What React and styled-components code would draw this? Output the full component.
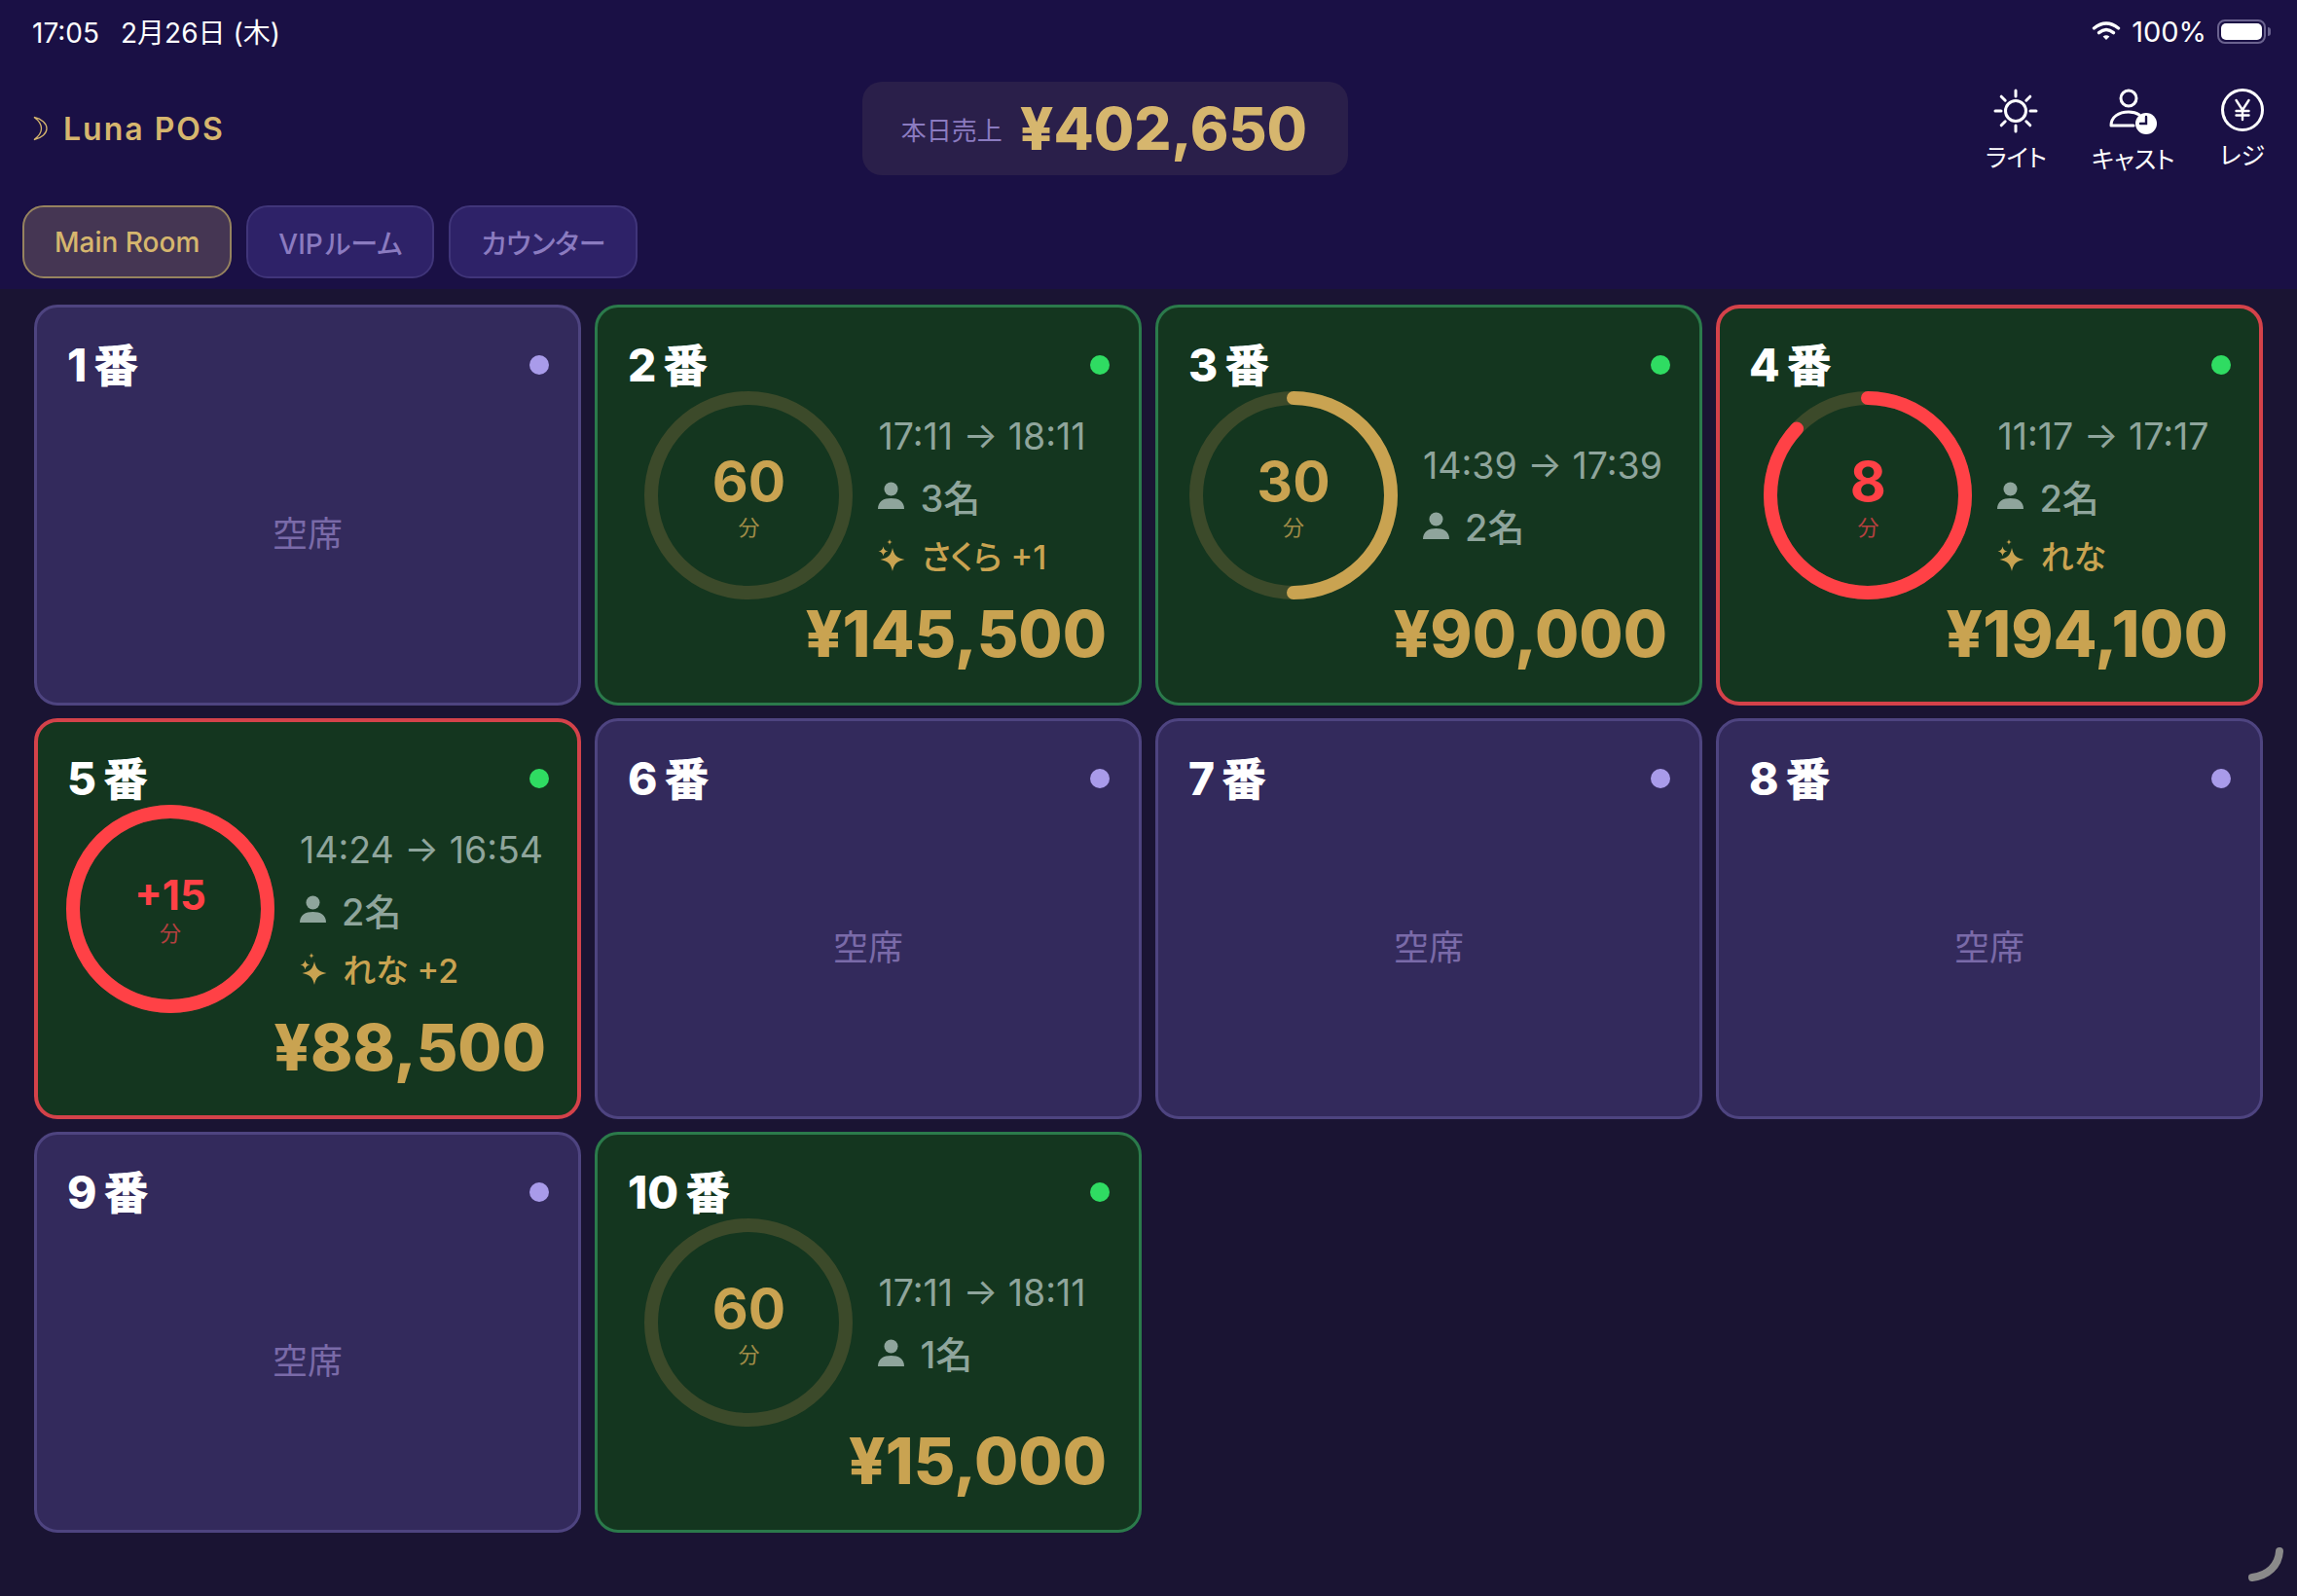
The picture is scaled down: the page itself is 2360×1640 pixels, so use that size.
import React from 'react'
import styled, { createGlobalStyle } from 'styled-components'

const sans = `Inter, "Noto Sans CJK JP", "Noto Sans", sans-serif`
const colors = {
  header: '#1a1045',
  page: '#1a1433',
  gold: '#c9a351',
  brightGold: '#d6b66e',
  lilac: '#8b7bc0',
  red: '#ff4146',
  track: '#3c4a2a',
  muted: '#8fa59c'
}

const tables = [
  { no: 1 },
  { no: 2, left: '60', pct: 0, time: '17:11 → 18:11', guests: '3名', cast: 'さくら +1', total: '¥145,500' },
  { no: 3, left: '30', pct: 50, time: '14:39 → 17:39', guests: '2名', total: '¥90,000' },
  { no: 4, left: '8', pct: 87, alert: true, time: '11:17 → 17:17', guests: '2名', cast: 'れな', total: '¥194,100' },
  { no: 5, left: '+15', pct: 100, alert: true, over: true, time: '14:24 → 16:54', guests: '2名', cast: 'れな +2', total: '¥88,500' },
  { no: 6 },
  { no: 7 },
  { no: 8 },
  { no: 9 },
  { no: 10, left: '60', pct: 0, time: '17:11 → 18:11', guests: '1名', total: '¥15,000' }
]

const rooms = ['Main Room', 'VIP\u200aルーム', 'カウンター']

const WifiIcon = () => (
  <svg width="30" height="22" viewBox="0 0 30 22" fill="none" stroke="#fff" strokeLinecap="round">
    <path d="M2.5 8 Q15 -2 27.5 8" strokeWidth="3.4" />
    <path d="M7.5 12.6 Q15 6.4 22.5 12.6" strokeWidth="3.4" />
    <path d="M15 20 L11.6 16.6 Q15 13.8 18.4 16.6 Z" fill="#fff" stroke="none" />
  </svg>
)

const Battery = () => (
  <BatteryWrap>
    <BatteryFill />
    <BatteryCap />
  </BatteryWrap>
)

const MoonIcon = () => (
  <svg width="18" height="26" viewBox="0 0 18 26" fill="none" stroke={colors.brightGold} strokeWidth="1.3">
    <path d="M2 1.500 C10 3 15 8 15 13 C15 18 10 23 2 24.500 C7 21 9.500 17 9.500 13 C9.500 9 7 5 2 1.500 Z" />
  </svg>
)

const SunIcon = () => (
  <svg width="48" height="48" viewBox="0 0 48 48" fill="none" stroke="#fff" strokeWidth="3" strokeLinecap="round">
    <circle cx="24" cy="24" r="10.5" />
    <path d="M24 3v6M24 39v6M3 24h6M39 24h6M9.200 9.200l4 4M34.800 34.800l4 4M9.200 38.800l4-4M34.800 13.200l4-4" />
  </svg>
)

const CastIcon = () => (
  <svg width="50" height="50" viewBox="0 0 50 50" fill="none" stroke="#fff" strokeWidth="3">
    <circle cx="20" cy="11" r="8" />
    <path d="M2 39 C2 30 10 25 20 25 C24 25 28 26 31 28 M2 39 H25" strokeLinecap="round" />
    <circle cx="38" cy="37" r="11" fill="#fff" stroke="none" />
    <path d="M38 30v7h-6" stroke={colors.header} strokeWidth="2.4" strokeLinecap="round" />
  </svg>
)

const YenIcon = () => (
  <svg width="46" height="46" viewBox="0 0 46 46" fill="none" stroke="#fff" strokeWidth="3">
    <circle cx="23" cy="23" r="20.5" />
    <path d="M16.500 13 L23 23 L29.500 13 M23 23 V33 M16.500 24 H29.500 M16.500 28.500 H29.500" strokeWidth="2.4" strokeLinecap="round" />
  </svg>
)

const PersonIcon = () => (
  <svg width="27" height="30" viewBox="0 0 27 30" fill={colors.muted}>
    <circle cx="13.5" cy="8.5" r="7" />
    <path d="M0 29 C0 21 6 18 13.5 18 C21 18 27 21 27 29 Z" />
  </svg>
)

const SparkleIcon = () => (
  <svg width="28" height="33" viewBox="0 0 28 33" fill={colors.gold}>
    <path d="M15 9 C16.500 16.500 19.500 19.500 27.500 21 C19.500 22.500 16.500 25.500 15 33 C13.500 25.500 10.500 22.500 2.500 21 C10.500 19.500 13.500 16.500 15 9 Z" />
    <path d="M5.500 7.500 C6 10.500 7.500 12 10.500 12.500 C7.500 13 6 14.500 5.500 17.500 C5 14.500 3.500 13 0.500 12.500 C3.500 12 5 10.500 5.500 7.500 Z" />
    <path d="M12 0 C12.300 2 13 2.700 15 3 C13 3.300 12.300 4 12 6 C11.700 4 11 3.300 9 3 C11 2.700 11.700 2 12 0 Z" />
  </svg>
)

const Ring = ({ left, pct, alert, over }) => {
  const stroke = alert ? colors.red : colors.gold
  return (
    <RingWrap>
      <svg width="214" height="214" viewBox="0 0 214 214" fill="none">
        <circle cx="107" cy="107" r="100" stroke={colors.track} strokeWidth="14" />
        {pct > 0 && (
          <circle
            cx="107"
            cy="107"
            r="100"
            stroke={stroke}
            strokeWidth="14"
            strokeLinecap={pct < 100 ? 'round' : 'butt'}
            pathLength="100"
            strokeDasharray={`${pct} 100`}
            transform="rotate(-90 107 107)"
          />
        )}
      </svg>
      <RingLabel>
        <RingValue $alert={alert} $small={over}>{left}</RingValue>
        <RingUnit $alert={alert}>分</RingUnit>
      </RingLabel>
    </RingWrap>
  )
}

const TableCard = ({ no, left, pct, alert, over, time, guests, cast, total }) => {
  const open = !total
  return (
    <Card $open={open} $alert={alert}>
      <TitleRow>
        <Title>
          <span>{no}</span>
          <span>番</span>
        </Title>
        <StatusDot $open={open} />
      </TitleRow>
      {open ? (
        <EmptyBody>空席</EmptyBody>
      ) : (
        <>
          <Middle>
            <Ring left={left} pct={pct} alert={alert} over={over} />
            <Info>
              <InfoRow>{time}</InfoRow>
              <GuestRow>
                <PersonIcon />
                {guests}
              </GuestRow>
              {cast && (
                <CastRow>
                  <SparkleIcon />
                  {cast}
                </CastRow>
              )}
            </Info>
          </Middle>
          <Total>{total}</Total>
        </>
      )}
    </Card>
  )
}

const App = () => (
  <Page>
    <GlobalStyle />
    <Header>
      <StatusBar>
        <Clock>
          <span>17:05</span>
          <span>2月26日 (木)</span>
        </Clock>
        <StatusRight>
          <WifiIcon />
          <span>100%</span>
          <Battery />
        </StatusRight>
      </StatusBar>
      <TopRow>
        <Logo>
          <MoonIcon />
          Luna POS
        </Logo>
        <SalesPill>
          <SalesLabel>本日売上</SalesLabel>
          <SalesValue>¥402,650</SalesValue>
        </SalesPill>
        <Actions>
          <Action>
            <SunIcon />
            ライト
          </Action>
          <Action>
            <CastIcon />
            キャスト
          </Action>
          <Action>
            <YenIcon />
            レジ
          </Action>
        </Actions>
      </TopRow>
      <Tabs>
        {rooms.map((room, i) => (
          <Tab key={room} $active={i === 0}>{room}</Tab>
        ))}
      </Tabs>
    </Header>
    <Grid>
      {tables.map(t => (
        <TableCard key={t.no} {...t} />
      ))}
    </Grid>
    <Spinner width="40" height="40" viewBox="0 0 40 40" fill="none">
      <path d="M34 5 C33 20 22 30 6 32" stroke="#8a8a8a" strokeWidth="8" strokeLinecap="round" />
    </Spinner>
  </Page>
)

const GlobalStyle = createGlobalStyle`
  html, body {
    margin: 0;
    padding: 0;
    background: ${colors.page};
  }
  * {
    box-sizing: border-box;
  }
`

const Page = styled.div`
  position: relative;
  width: 2360px;
  height: 1640px;
  overflow: hidden;
  background: ${colors.page};
  font-family: ${sans};
  font-feature-settings: "palt";
  color: #fff;
`

const Header = styled.header`
  height: 297px;
  background: ${colors.header};
  display: flex;
  flex-direction: column;
`

const StatusBar = styled.div`
  height: 64px;
  padding: 0 31px 0 33px;
  display: flex;
  align-items: center;
  justify-content: space-between;
  font-size: 28px;
`

const Clock = styled.div`
  display: flex;
  align-items: baseline;
  gap: 22px;
`

const StatusRight = styled.div`
  display: flex;
  align-items: center;
  gap: 11px;
  font-size: 29px;
`

const BatteryWrap = styled.div`
  position: relative;
  width: 50px;
  height: 25px;
  margin-right: 1px;
  border: 2px solid #6a628f;
  border-radius: 8px;
  padding: 2px;
`

const BatteryFill = styled.div`
  width: 100%;
  height: 100%;
  background: #fff;
  border-radius: 5px;
`

const BatteryCap = styled.div`
  position: absolute;
  right: -7px;
  top: 6px;
  width: 3px;
  height: 9px;
  background: #6a628f;
  border-radius: 0 3px 3px 0;
`

const TopRow = styled.div`
  height: 136px;
  padding: 0 33px;
  display: flex;
  align-items: center;
  justify-content: space-between;
`

const Logo = styled.div`
  display: flex;
  align-items: center;
  gap: 14px;
  font-size: 32px;
  font-weight: 600;
  letter-spacing: 2px;
  color: ${colors.brightGold};
`

const SalesPill = styled.div`
  height: 96px;
  padding: 0 42px 0 40px;
  display: flex;
  align-items: center;
  gap: 18px;
  background: #2a1f4a;
  border-radius: 20px;
`

const SalesLabel = styled.span`
  font-size: 26px;
  color: ${colors.lilac};
`

const SalesValue = styled.span`
  font-size: 60px;
  font-weight: 800;
  color: ${colors.brightGold};
`

const Actions = styled.div`
  display: flex;
  align-items: flex-start;
  gap: 46px;
  padding-top: 6px;
`

const Action = styled.div`
  display: flex;
  flex-direction: column;
  align-items: center;
  gap: 8px;
  font-size: 25px;
  line-height: 32px;
`

const Tabs = styled.div`
  display: flex;
  gap: 15px;
  padding-left: 23px;
  margin-top: 11px;
`

const Tab = styled.div`
  height: 75px;
  padding: 0 31px;
  display: flex;
  align-items: center;
  font-size: 28px;
  font-weight: 500;
  border-radius: 22px;
  border: 2px solid ${p => (p.$active ? '#96835f' : '#40357a')};
  background: ${p => (p.$active ? '#453653' : '#2e2268')};
  color: ${p => (p.$active ? colors.brightGold : colors.lilac)};
`

const Grid = styled.main`
  padding: 16px 35px;
  display: grid;
  grid-template-columns: repeat(4, minmax(0, 1fr));
  grid-auto-rows: 412px;
  gap: 13px 14px;
`

const Card = styled.article`
  display: flex;
  flex-direction: column;
  padding: ${p => (p.$alert ? '31px 30px 0 30px' : '32px 31px 0 31px')};
  border-radius: 24px;
  border: ${p => (p.$alert ? 4 : 3)}px solid
    ${p => (p.$alert ? '#d4424a' : p.$open ? '#4e4480' : '#2b7a4b')};
  background: ${p => (p.$open ? '#332a5c' : '#14361f')};
`

const TitleRow = styled.div`
  height: 54px;
  flex: none;
  display: flex;
  align-items: center;
  justify-content: space-between;
`

const Title = styled.div`
  display: flex;
  gap: 7px;
  font-size: 46px;
  font-weight: 800;
  line-height: 54px;
`

const StatusDot = styled.span`
  width: 20px;
  height: 20px;
  margin-right: -1px;
  border-radius: 50%;
  background: ${p => (p.$open ? '#a99bea' : '#2fdc62')};
`

const EmptyBody = styled.div`
  flex: 1;
  margin-bottom: 33px;
  display: flex;
  align-items: center;
  justify-content: center;
  font-size: 36px;
  color: #7a6aa8;
`

const Middle = styled.div`
  height: 214px;
  flex: none;
  display: flex;
  align-items: center;
  justify-content: center;
  gap: 26px;
  padding-right: 6px;
`

const RingWrap = styled.div`
  position: relative;
  width: 214px;
  height: 214px;
  flex: none;
`

const RingLabel = styled.div`
  position: absolute;
  inset: 0;
  display: flex;
  flex-direction: column;
  align-items: center;
  justify-content: center;
`

const RingValue = styled.div`
  font-size: ${p => (p.$small ? 42 : 57)}px;
  line-height: ${p => (p.$small ? 50 : 66)}px;
  font-weight: 700;
  color: ${p => (p.$alert ? colors.red : colors.gold)};
`

const RingUnit = styled.div`
  font-size: 22px;
  line-height: 28px;
  color: ${p => (p.$alert ? '#b5403f' : '#a08c47')};
`

const Info = styled.div`
  display: flex;
  flex-direction: column;
`

const InfoRow = styled.div`
  height: 61px;
  display: flex;
  align-items: center;
  gap: 16px;
  font-size: 37.5px;
  white-space: nowrap;
  color: ${colors.muted};
`

const GuestRow = styled(InfoRow)`
  font-size: 38px;
  font-weight: 500;
`

const CastRow = styled(InfoRow)`
  font-size: 34px;
  font-weight: 500;
  color: ${colors.gold};
`

const Total = styled.div`
  height: 72px;
  flex: none;
  margin-right: 2px;
  text-align: right;
  font-size: 65.5px;
  line-height: 72px;
  font-weight: 800;
  color: ${colors.gold};
`

const Spinner = styled.svg`
  position: absolute;
  right: 12px;
  bottom: 11px;
`

export default App
